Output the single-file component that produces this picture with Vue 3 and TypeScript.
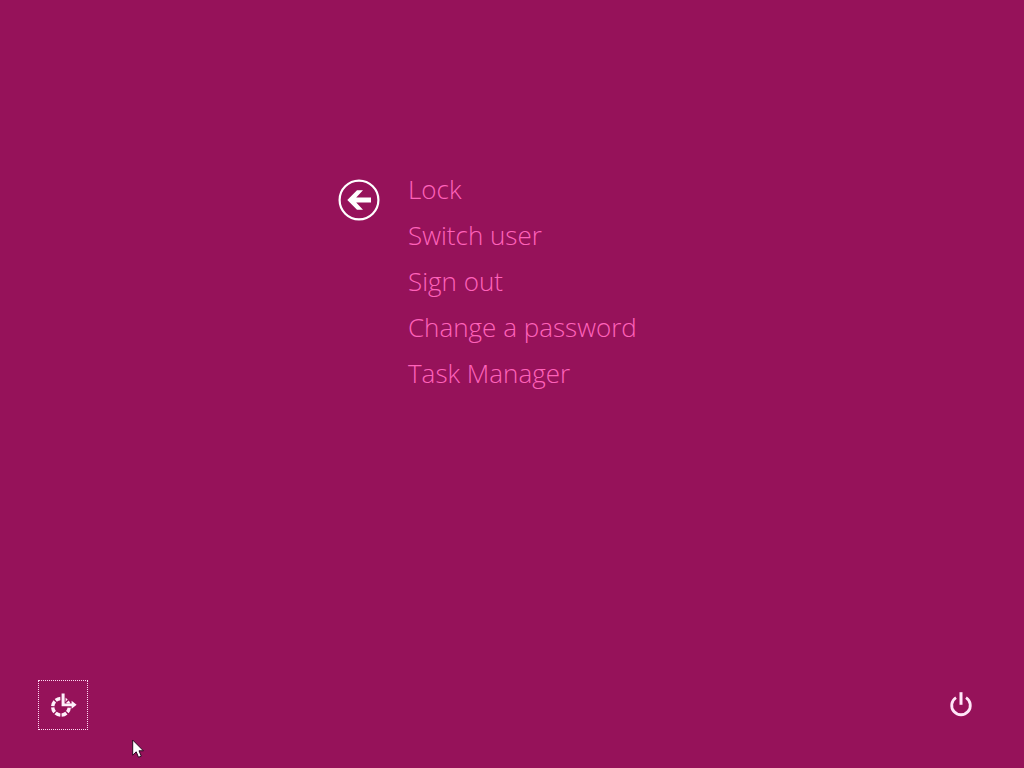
<script setup lang="ts">
interface MenuAction {
  id: string
  label: string
}

const actions: MenuAction[] = [
  { id: 'lock', label: 'Lock' },
  { id: 'switch', label: 'Switch user' },
  { id: 'signout', label: 'Sign out' },
  { id: 'password', label: 'Change a password' },
  { id: 'taskmgr', label: 'Task Manager' },
]
</script>

<template>
  <div class="screen">
    <main class="content">
      <button class="back" type="button" aria-label="Back">
        <svg viewBox="0 0 42 42" width="42" height="42" aria-hidden="true">
          <circle cx="21" cy="21" r="19.4" fill="none" stroke="#fff" stroke-width="2.2" />
          <path d="M9.3 21 19 11.3h6L18.2 18.6H33v4.8H18.2l6.8 7.3h-6z" fill="#fff" />
        </svg>
      </button>
      <nav aria-label="Security options">
        <ul class="menu">
          <li v-for="action in actions" :key="action.id">
            <button class="action" type="button">{{ action.label }}</button>
          </li>
        </ul>
      </nav>
    </main>

    <footer class="corner-bar">
      <button class="corner focused" type="button" aria-label="Ease of access">
        <svg viewBox="0 0 30 30" width="30" height="30" aria-hidden="true">
          <circle
            cx="13" cy="16.8" r="8.3" fill="none" stroke="#fff0fb" stroke-width="3.4"
            stroke-dasharray="5.2 1.319" stroke-dashoffset="-0.6"
          />
          <path d="M12.6 3h5v10.4h6v4h-11z" fill="#96125a" />
          <path d="M13.6 3.4h3v10h7v-2.6l5 4-5 4v-2.6h-10z" fill="#fff0fb" />
        </svg>
      </button>
      <button class="corner" type="button" aria-label="Power">
        <svg viewBox="0 0 30 30" width="30" height="30" aria-hidden="true">
          <path d="M10 7.6a9.3 9.3 0 1 0 10 0" fill="none" stroke="#ffe6f8" stroke-width="2.8" />
          <path d="M15 2.2v12.6" fill="none" stroke="#ffe6f8" stroke-width="3" />
        </svg>
      </button>
    </footer>

    <svg class="pointer" viewBox="0 0 12 20" width="12" height="20" aria-hidden="true">
      <path
        d="M.7 1v15.2l3.5-3.4 2.3 5.5 2.8-1.2L7 11.8h4.4z"
        fill="#fff" stroke="#2a0820" stroke-width="1"
      />
    </svg>
  </div>
</template>

<style>
body {
  background: #96125a;
}
</style>

<style scoped>
.screen {
  position: relative;
  box-sizing: border-box;
  min-height: 100vh;
  padding: 166px 38px 38px;
  display: flex;
  flex-direction: column;
  justify-content: space-between;
  background: #96125a;
  font-family: "Segoe UI", "Open Sans", "Noto Sans", sans-serif;
}

button {
  padding: 0;
  border: 0;
  background: none;
  font: inherit;
  color: inherit;
  cursor: default;
}

svg {
  display: block;
}

.content {
  display: flex;
  align-items: flex-start;
  gap: 28px;
  margin-left: calc(33.333% - 16px);
}

.back {
  flex: none;
  margin-top: 13px;
}

.menu {
  margin: 0;
  padding: 0;
  list-style: none;
}

.action {
  display: block;
  height: 46px;
  font-size: 26px;
  font-weight: 300;
  line-height: 46px;
  color: #ff62ba;
  text-align: left;
  white-space: nowrap;
}

.corner-bar {
  display: flex;
  justify-content: space-between;
}

.corner {
  box-sizing: border-box;
  width: 50px;
  height: 50px;
  display: flex;
  align-items: center;
  justify-content: center;
}

.focused {
  border: 1px dotted #ffd9f2;
}

.pointer {
  position: absolute;
  left: 132px;
  bottom: 9px;
}
</style>
